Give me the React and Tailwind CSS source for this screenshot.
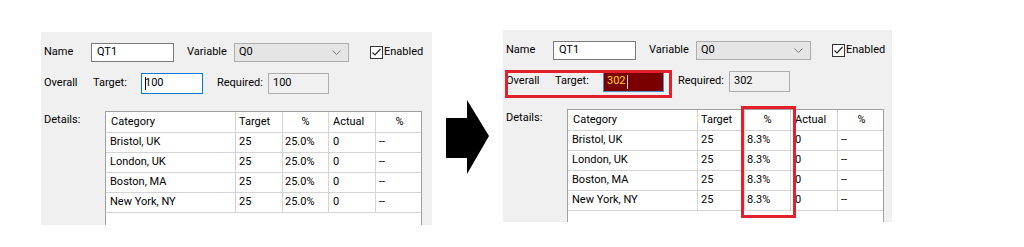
import React from "react";

const rows = [
  ["Bristol, UK", "25"],
  ["London, UK", "25"],
  ["Boston, MA", "25"],
  ["New York, NY", "25"],
];

function Checkbox() {
  return (
    <span className="w-[13px] h-[13px] border border-[#333] bg-white flex items-center justify-center">
      <svg width="11" height="11" viewBox="0 0 11 11" fill="none">
        <polyline points="1.5 5.5 4 8 9.5 2" stroke="#222" strokeWidth="1.2" />
      </svg>
    </span>
  );
}

function Table({ pct }) {
  const cols = "grid grid-cols-[130px_47px_46px_47px_47px]";
  return (
    <div className="w-[317px] h-full bg-white border border-[#a0a0a0] border-b-0 overflow-hidden">
      <div className={`${cols} h-[21px] border-b border-[#d4d4d4]`}>
        <div className="pl-[5px] flex items-center border-r border-[#d4d4d4]">Category</div>
        <div className="pl-[3px] flex items-center border-r border-[#d4d4d4]">Target</div>
        <div className="flex items-center justify-center border-r border-[#d4d4d4]">%</div>
        <div className="pl-[4px] flex items-center border-r border-[#d4d4d4]">Actual</div>
        <div className="flex items-center justify-center">%</div>
      </div>
      {rows.map(([city, target]) => (
        <div key={city} className={`${cols} h-[20px] border-b border-[#d4d4d4]`}>
          <div className="pl-[4px] flex items-center border-r border-[#d4d4d4]">{city}</div>
          <div className="pl-[3px] flex items-center border-r border-[#d4d4d4]">{target}</div>
          <div className="pl-[2px] flex items-center border-r border-[#d4d4d4]">{pct}</div>
          <div className="pl-[4px] flex items-center border-r border-[#d4d4d4]">0</div>
          <div className="pl-[3px] flex items-center">--</div>
        </div>
      ))}
    </div>
  );
}

function Panel({ after }) {
  return (
    <div className="relative w-full h-full bg-[#f0f0f0] pt-[11px] flex flex-col">
      {/* Name / Variable / Enabled */}
      <div className="flex items-center h-[19px] pl-[3px]">
        <span className="w-[47px]">Name</span>
        <div className="w-[83px] h-[19px] bg-white border border-[#7a7a7a] pl-[5px] flex items-center">QT1</div>
        <span className="w-[47px] ml-[13px]">Variable</span>
        <div className="w-[115px] h-[19px] bg-[#e5e5e5] border border-[#adadad] pl-[4px] pr-[7px] flex items-center justify-between">
          <span>Q0</span>
          <svg width="9" height="6" viewBox="0 0 9 6" fill="none">
            <polyline points="0.5 0.5 4.5 4.5 8.5 0.5" stroke="#777" strokeWidth="1" />
          </svg>
        </div>
        <span className="ml-[21px]"><Checkbox /></span>
        <span className="ml-[1px]">Enabled</span>
      </div>

      {/* Overall */}
      <div className="flex items-center h-[21px] pl-[3px] mt-[11px]">
        <span className="w-[49px]">Overall</span>
        <span className="w-[48px]">Target:</span>
        {after ? (
          <div className="w-[61px] h-[21px] bg-[#7a0000] border border-[#4f8fc7] pl-[3px] flex items-center text-[#ffd400]">
            302<span className="w-px h-[14px] bg-[#cfe3ff] ml-[1px]" />
          </div>
        ) : (
          <div className="w-[62px] h-[21px] bg-white border border-[#0078d7] pl-[3px] flex items-center">
            <span className="w-px h-[13px] bg-black mr-[-1px]" />100
          </div>
        )}
        <span className="w-[51px] ml-[14px]">Required:</span>
        <div className="w-[61px] h-[21px] bg-[#f0f0f0] border border-[#adadad] pl-[4px] flex items-center">
          {after ? "302" : "100"}
        </div>
      </div>

      {/* Details */}
      <div className="flex flex-1 min-h-0 mt-[17px] pl-[3px]">
        <span className="w-[61px] mt-[1px]">Details:</span>
        <Table pct={after ? "8.3%" : "25.0%"} />
      </div>

      {after && (
        <>
          <div className="absolute left-[2px] top-[40px] w-[167px] h-[28px] border-[3px] border-[#e3202b]" />
          <div className="absolute left-[238px] top-[76px] w-[55px] h-[112px] border-[3px] border-[#e3202b]" />
        </>
      )}
    </div>
  );
}

export default function App() {
  return (
    <div
      className="w-[1024px] h-[247px] bg-white flex items-start text-[11px] text-black overflow-hidden"
      style={{ fontFamily: "Roboto, 'Liberation Sans', sans-serif" }}
    >
      <div className="ml-[41px] mt-[32px] w-[391px] h-[193px]">
        <Panel />
      </div>
      <svg className="ml-[14px] mt-[100px]" width="44" height="76" viewBox="0 0 44 76">
        <polygon points="0 18 21 18 21 0 43 36 21 74 21 58 0 58" fill="#000" />
      </svg>
      <div className="ml-[13px] mt-[30px] w-[389px] h-[192px]">
        <Panel after />
      </div>
    </div>
  );
}
